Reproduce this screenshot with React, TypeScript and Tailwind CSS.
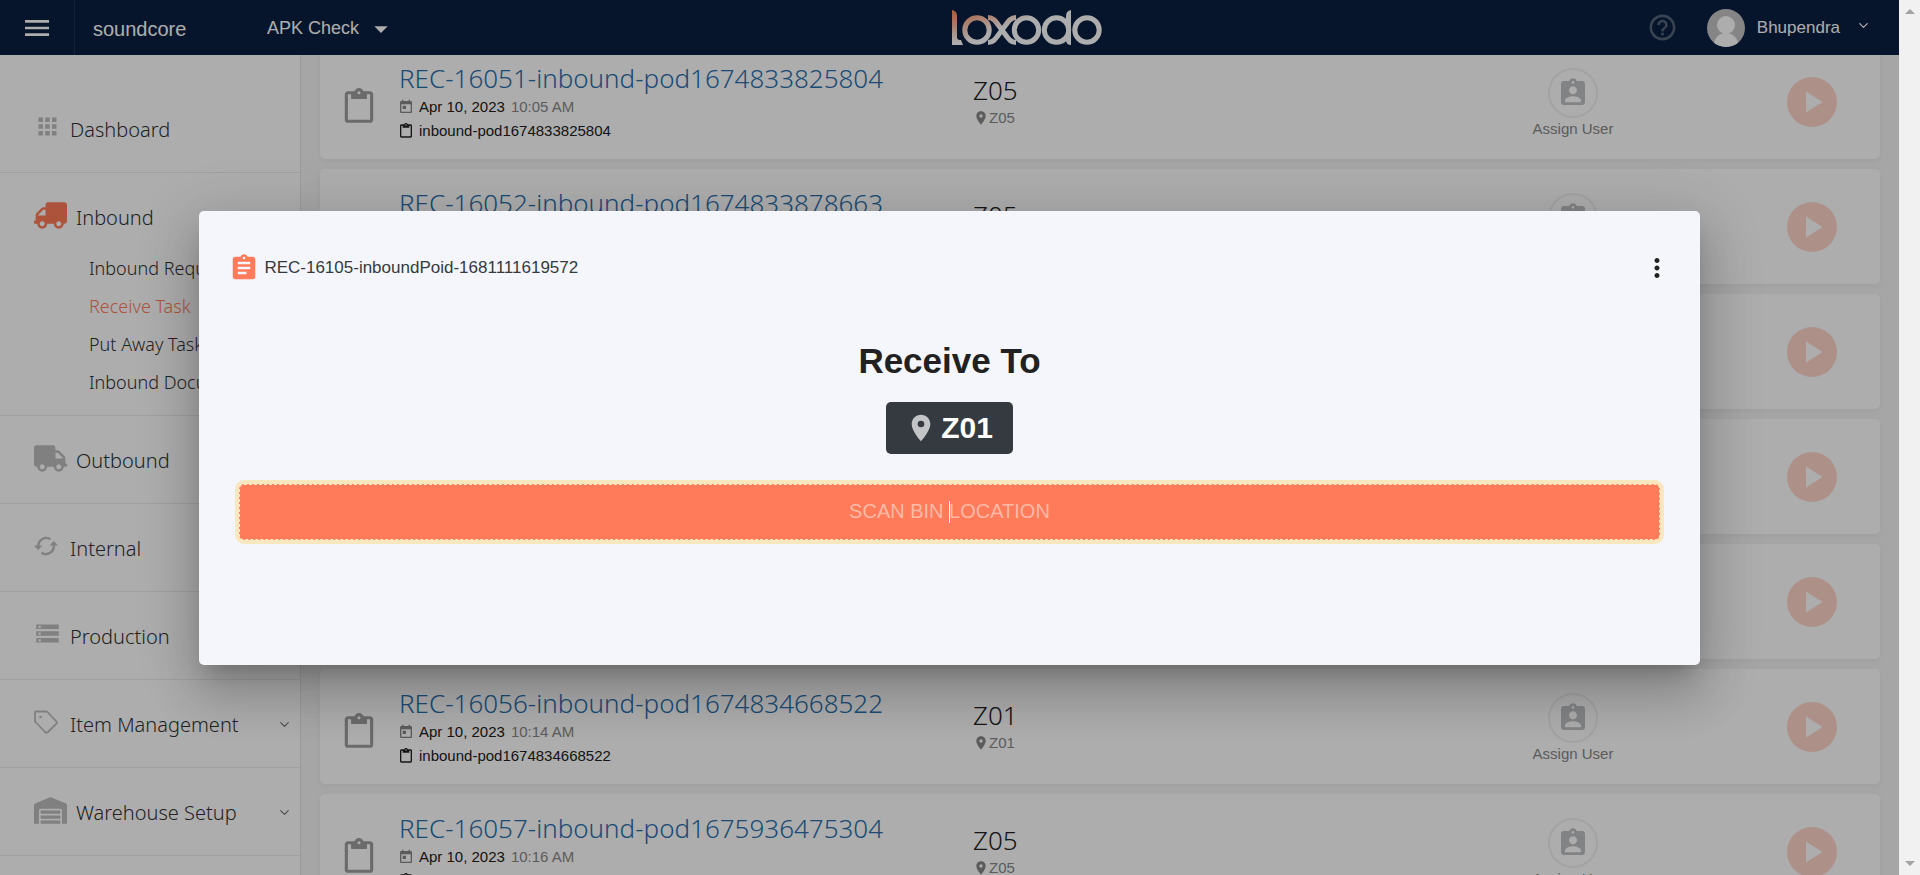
import type { ReactNode } from "react";
import {
  MdApps,
  MdArrowDropDown,
  MdAssignment,
  MdAssignmentInd,
  MdContentPaste,
  MdHelpOutline,
  MdLocationOn,
  MdMenu,
  MdMoreVert,
  MdPlayArrow,
  MdStorage,
  MdToday,
} from "react-icons/md";
import { FaTruck, FaWarehouse } from "react-icons/fa";
import { ChevronDown } from "lucide-react";

type Task = { id: string; pod: string; time: string; zone: string };

const tasks: Task[] = [
  { id: "REC-16051", pod: "inbound-pod1674833825804", time: "10:05 AM", zone: "Z05" },
  { id: "REC-16052", pod: "inbound-pod1674833878663", time: "10:06 AM", zone: "Z05" },
  { id: "REC-16053", pod: "inbound-pod1674834012954", time: "10:08 AM", zone: "Z01" },
  { id: "REC-16054", pod: "inbound-pod1674834235210", time: "10:10 AM", zone: "Z01" },
  { id: "REC-16055", pod: "inbound-pod1674834451377", time: "10:12 AM", zone: "Z01" },
  { id: "REC-16056", pod: "inbound-pod1674834668522", time: "10:14 AM", zone: "Z01" },
  { id: "REC-16057", pod: "inbound-pod1675936475304", time: "10:16 AM", zone: "Z05" },
];

function Logo() {
  return (
    <svg width="150" height="36" viewBox="0 0 150 36" role="img" aria-label="loxodo">
      <defs>
        <linearGradient id="stem" gradientUnits="userSpaceOnUse" x1="0" y1="0" x2="4" y2="32">
          <stop offset="0" stopColor="#ff8a5c" />
          <stop offset="0.5" stopColor="#f7b9a2" />
          <stop offset="1" stopColor="#ffffff" />
        </linearGradient>
        <linearGradient id="ring" gradientUnits="userSpaceOnUse" x1="30" y1="-8" x2="42" y2="22">
          <stop offset="0" stopColor="#ff8a5c" />
          <stop offset="1" stopColor="#ffffff" />
        </linearGradient>
      </defs>
      <path d="M0 0 Q5 1 5 6 V27 Q5 30 8 30 H9 L11 35 H0 Z" fill="url(#stem)" />
      <g fill="none" stroke="url(#ring)" strokeWidth="5">
        <circle cx="25" cy="20" r="12.2" />
        <path d="M36 7.500 C42 7.500 44 12 50 20 S58 32.500 64 32.500" />
        <path d="M64 7.500 C58 7.500 56 12 50 20 S42 32.500 36 32.500" />
        <circle cx="74.500" cy="20" r="12.2" />
        <circle cx="104.500" cy="20" r="12.2" />
        <circle cx="135" cy="20" r="12.2" />
      </g>
      <path d="M119 0 Q114 1 114 6 V30 Q114 35 119 35 Z" fill="#ffffff" />
    </svg>
  );
}

function SyncIcon() {
  return (
    <svg width="24" height="20" viewBox="0 0 24 20" fill="none" aria-hidden="true">
      <g stroke="#bdbdbd" strokeWidth="2.400">
        <path d="M16.600 3.200 A8 8 0 0 0 4.300 10" />
        <path d="M7.400 16.800 A8 8 0 0 0 19.700 9" />
      </g>
      <path d="M0 9.500 H8.400 L4.200 14 Z" fill="#bdbdbd" />
      <path d="M15.600 9.500 H24 L19.800 5 Z" fill="#bdbdbd" />
    </svg>
  );
}

function TagIcon() {
  return (
    <svg width="24" height="24" viewBox="0 0 24 24" fill="none" aria-hidden="true">
      <path
        d="M1 2.500 V11.500 L11 22 Q12.500 23.500 14 22 L22.400 13.600 Q23.400 12.500 22.400 11.500 L13 1.500 H2 Q1 1.500 1 2.500 Z"
        stroke="#bdbdbd"
        strokeWidth="1.800"
        strokeLinejoin="round"
      />
      <circle cx="6.500" cy="7" r="1.300" fill="#bdbdbd" />
    </svg>
  );
}

function NavItem({
  icon,
  label,
  wide,
  chevron,
}: {
  icon: ReactNode;
  label: string;
  wide?: boolean;
  chevron?: boolean;
}) {
  return (
    <a href="#" className="flex h-[87px] items-center pt-[2px] pr-2 text-[#333]">
      <span className={wide ? "flex w-[42px] pb-1" : "flex w-[36px] pb-1.5"}>{icon}</span>
      <span className="flex-1">{label}</span>
      {chevron && <ChevronDown size={15} className="text-[#777]" />}
    </a>
  );
}

function Sidebar() {
  return (
    <nav
      aria-label="Main"
      className="w-[301px] shrink-0 border-r border-[#e6e6e6] bg-white pt-[30px] font-['Noto_Sans',sans-serif] text-[20px] font-light"
    >
      <ul className="divide-y divide-[#ececec] border-b border-[#ececec] [&>li]:pl-[34px]">
        <li>
          <NavItem icon={<MdApps size={27} color="#bdbdbd" />} label="Dashboard" />
        </li>
        <li className="pb-[14px]">
          <NavItem wide icon={<FaTruck size={33} color="#ff7b59" className="-scale-x-100" />} label="Inbound" />
          <ul className="-mt-[11px] pl-[55px] text-[18px] leading-[38px] text-[#333]">
            <li><a href="#">Inbound Request</a></li>
            <li><a href="#" className="text-[#ff7b59]">Receive Task</a></li>
            <li><a href="#">Put Away Task</a></li>
            <li><a href="#">Inbound Document</a></li>
          </ul>
        </li>
        <li><NavItem wide icon={<FaTruck size={33} color="#bdbdbd" />} label="Outbound" /></li>
        <li><NavItem icon={<SyncIcon />} label="Internal" /></li>
        <li><NavItem icon={<MdStorage size={27} color="#bdbdbd" />} label="Production" /></li>
        <li><NavItem chevron icon={<TagIcon />} label="Item Management" /></li>
        <li><NavItem chevron wide icon={<FaWarehouse size={33} color="#bdbdbd" />} label="Warehouse Setup" /></li>
      </ul>
    </nav>
  );
}

function Header() {
  return (
    <header className="grid h-[55px] shrink-0 grid-cols-[952fr_150px_797fr] items-center bg-[#091f40] text-white">
      <div className="flex h-full items-center">
        <button aria-label="Menu" className="flex h-full w-[75px] items-center justify-center border-r border-[#1c304e]">
          <MdMenu size={32} />
        </button>
        <span className="w-[192px] pt-[2px] pl-[18px] text-[20px]">soundcore</span>
        <button className="flex items-center gap-[6px] pt-[2px] text-[18px]">
          APK Check
          <MdArrowDropDown size={32} />
        </button>
      </div>
      <Logo />
      <div className="flex items-center justify-end pr-[28px]">
        <button aria-label="Help" className="text-[#55637a]">
          <MdHelpOutline size={31} />
        </button>
        <button className="ml-[29px] flex items-center text-[17px]">
          <svg width="38" height="38" viewBox="0 0 38 38" aria-hidden="true">
            <defs>
              <clipPath id="avatar"><circle cx="19" cy="19" r="19" /></clipPath>
            </defs>
            <g clipPath="url(#avatar)">
              <rect width="38" height="38" fill="#c4c4c4" />
              <circle cx="19" cy="16" r="9" fill="#ffffff" />
              <path d="M6 38 Q8 24 19 24 T32 38 Z" fill="#ffffff" />
            </g>
          </svg>
          <span className="mr-[16px] ml-[12px]">Bhupendra</span>
          <ChevronDown size={15} className="mb-[4px]" />
        </button>
      </div>
    </header>
  );
}

function TaskCard({ task }: { task: Task }) {
  return (
    <li className="grid h-[115px] grid-cols-[54px_574fr_525fr_150px_232px] items-center rounded-[5px] bg-white pl-[25px] text-[15px] text-[#212121] shadow-[0_2px_6px_rgba(0,0,0,0.05)]">
      <MdContentPaste size={38} color="#9e9e9e" className="mt-[10px] -ml-[5px]" />
      <div>
        <a href="#" className="block font-['Noto_Sans',sans-serif] text-[26px] leading-[34px] font-light text-[#2a6fac]">
          {task.id}-{task.pod}
        </a>
        <p className="flex items-center leading-[24px]">
          <MdToday size={16} color="#888" className="-ml-[1px] mr-[5px]" />
          Apr 10, 2023 <span className="ml-[6px] text-[#888]">{task.time}</span>
        </p>
        <p className="flex items-center leading-[24px]">
          <MdContentPaste size={16} className="-ml-[1px] mr-[5px]" />
          {task.pod}
        </p>
      </div>
      <div>
        <p className="font-['Noto_Sans',sans-serif] text-[26px] leading-[32px] font-light">{task.zone}</p>
        <p className="flex items-center leading-[24px] text-[#888]">
          <MdLocationOn size={16} />
          {task.zone}
        </p>
      </div>
      <button className="flex flex-col items-center pt-[4px] leading-[22px] text-[#888]">
        <span className="flex size-[50px] items-center justify-center rounded-full border-2 border-[#f0f0f0]">
          <MdAssignmentInd size={32} color="#bfc1c4" />
        </span>
        Assign User
      </button>
      <button
        aria-label="Start task"
        className="mr-[43px] flex size-[50px] items-center justify-center justify-self-end rounded-full bg-[#ffd5c8] text-white"
      >
        <MdPlayArrow size={36} />
      </button>
    </li>
  );
}

function ReceiveDialog() {
  return (
    <section
      role="dialog"
      aria-label="Receive To"
      className="w-[79%] rounded-[5px] bg-[#f5f6fb] px-[32px] pt-[38px] pb-[125px] shadow-[0_14px_19px_-9px_rgba(0,0,0,0.2),0_30px_48px_4px_rgba(0,0,0,0.14),0_11px_58px_10px_rgba(0,0,0,0.12)]"
    >
      <div className="flex h-[38px] items-center">
        <MdAssignment size={30} color="#ff7b59" className="-ml-[2px]" />
        <span className="ml-[5px] flex-1 pt-px text-[17px] text-[#343a40]">REC-16105-inboundPoid-1681111619572</span>
        <button aria-label="More options" className="-mr-[4px] text-[#212121]">
          <MdMoreVert size={30} />
        </button>
      </div>
      <div className="flex flex-col items-center px-2">
        <h2 className="mt-[52px] text-[35px] leading-[44px] font-bold text-[#212121]">Receive To</h2>
        <p className="mt-[19px] flex h-[52px] items-center rounded-[5px] bg-[#343a40] pr-[20px] pl-[19px] text-[30px] font-bold text-white">
          <MdLocationOn size={32} color="#c2c4c6" className="mr-[4px]" />
          Z01
        </p>
        <label className="relative mt-[30px] block w-full">
          <span className="sr-only">Scan bin location</span>
          <input
            type="text"
            placeholder="SCAN BIN LOCATION"
            className="block h-[56px] w-full rounded-[5px] border border-dashed border-[#f9e7bf] bg-[#ff7b59] text-center text-[20px] text-white caret-transparent outline-none ring-4 ring-[#f8e8c0] placeholder:text-[#ffb9a6]"
          />
          <span className="absolute top-[17px] left-1/2 h-[22px] w-px bg-white" />
        </label>
      </div>
    </section>
  );
}

function Scrollbar() {
  return (
    <div aria-hidden="true" className="flex w-[21px] shrink-0 flex-col items-center justify-between bg-[#f1f1f1] py-[9px]">
      <span className="border-x-[5px] border-b-[5px] border-x-transparent border-b-[#a3a3a3]" />
      <span className="border-x-[5px] border-t-[5px] border-x-transparent border-t-[#a3a3a3]" />
    </div>
  );
}

export default function App() {
  return (
    <div className="flex h-screen overflow-hidden font-['Liberation_Sans',Arial,sans-serif]">
      <div className="relative flex min-w-0 flex-1 flex-col overflow-hidden bg-[#f5f5f5]">
        <Header />
        <div className="flex min-h-0 flex-1 overflow-hidden">
          <Sidebar />
          <main className="min-w-0 flex-1 overflow-hidden pr-[19px] pl-[19px]">
            <ul className="-mt-[11px] flex flex-col gap-[10px]">
              {tasks.map((task) => (
                <TaskCard key={task.id} task={task} />
              ))}
            </ul>
          </main>
        </div>
        <div className="absolute inset-0 flex items-center justify-center bg-black/32">
          <ReceiveDialog />
        </div>
      </div>
      <Scrollbar />
    </div>
  );
}
